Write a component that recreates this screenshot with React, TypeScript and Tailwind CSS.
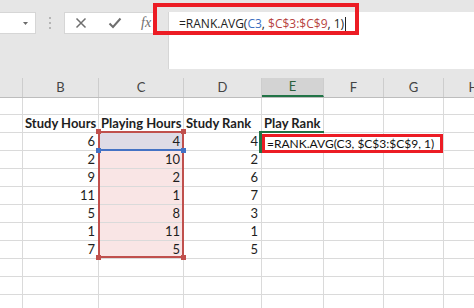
import React from "react";

const cols = [
  { k: "A", w: "w-[23px]" },
  { k: "B", w: "w-[76px]" },
  { k: "C", w: "w-[85px]" },
  { k: "D", w: "w-[78px]" },
  { k: "E", w: "w-[62px]" },
  { k: "F", w: "w-[60px]" },
  { k: "G", w: "w-[60px]" },
  { k: "H", w: "w-[60px]" },
];

const data: [string, string, string][] = [
  ["6", "4", "4"],
  ["2", "10", "2"],
  ["9", "2", "6"],
  ["11", "1", "7"],
  ["5", "8", "3"],
  ["1", "11", "1"],
  ["7", "5", "5"],
];

function Cell({
  w,
  children,
  align = "right",
  bold = false,
  bg = "",
  h = "h-[18px]",
}: {
  w: string;
  children?: React.ReactNode;
  align?: "left" | "right";
  bold?: boolean;
  bg?: string;
  h?: string;
}) {
  return (
    <div
      className={`${w} ${h} ${bg} shrink-0 box-border border-r border-b border-[#dadada] flex items-center overflow-visible whitespace-nowrap text-[13px] leading-none text-[#1e1e1e] ${
        align === "right" ? "justify-end pr-[3px]" : "justify-start pl-[2px]"
      } ${bold ? "font-bold" : ""}`}
    >
      {children}
    </div>
  );
}

export default function App() {
  return (
    <div
      className="relative w-[474px] h-[308px] overflow-hidden bg-[#e6e6e6]"
      style={{ fontFamily: "Lato, 'Liberation Sans', sans-serif" }}
    >
      {/* formula bar area */}
      <div className="flex items-start pt-[12px] h-[69px]">
        <div className="w-[36px] h-[22px] bg-white border border-l-0 border-[#d6d6d6] box-border flex items-center justify-end pr-[7px]">
          <svg width="5" height="3" viewBox="0 0 5 3">
            <path d="M0 0 L5 0 L2.5 3 Z" fill="#6b6b6b" />
          </svg>
        </div>
        <div className="ml-[13px] h-[22px] flex flex-col justify-center gap-[3px]">
          <div className="w-[2px] h-[2px] bg-[#b5b5b5]" />
          <div className="w-[2px] h-[2px] bg-[#b5b5b5]" />
          <div className="w-[2px] h-[2px] bg-[#b5b5b5]" />
        </div>
        <div className="ml-[13px] w-[90px] h-[22px] bg-white border border-[#d6d6d6] box-border flex items-center">
          <svg width="12" height="12" viewBox="0 0 12 12" className="ml-[10px]">
            <path d="M1.5 1.5 L10.5 10.5 M10.5 1.5 L1.5 10.5" stroke="#6e6e6e" strokeWidth="1.5" />
          </svg>
          <svg width="14" height="12" viewBox="0 0 14 12" className="ml-[21px]">
            <path d="M1.5 6.5 L5 10 L12.5 1.5" stroke="#6e6e6e" strokeWidth="2" fill="none" />
          </svg>
          <span
            className="ml-[19px] text-[14px] italic text-[#6e6e6e] leading-none"
            style={{ fontFamily: "'Liberation Serif', serif" }}
          >
            fx
          </span>
        </div>
        <div
          className="ml-[14px] flex-1 h-[57px] bg-white border-l border-[#d6d6d6] pt-[4px] pl-[10px] text-[12px] leading-[16px] text-[#222] whitespace-nowrap"
          style={{ fontFamily: "'Open Sans', 'Liberation Sans', sans-serif" }}
        >
          =RANK.AVG(<span className="text-[#3c6fbf]">C3</span>,{" "}
          <span className="text-[#b8433f]">$C$3:$C$9</span>, 1)
          <span className="inline-block w-[1px] h-[15px] bg-[#222] ml-[1px] align-middle" />
        </div>
      </div>

      {/* red box on formula bar */}
      <div className="absolute left-[153px] top-[3px] w-[206px] h-[32px] border-[4px] border-[#ec1c24] pointer-events-none" />

      {/* column headers */}
      <div className="mt-[9px] flex h-[19px] border-b border-[#bdbdbd] box-content">
        {cols.map((c) => (
          <div
            key={c.k}
            className={`${c.w} shrink-0 box-border border-r border-[#cdcdcd] flex items-center justify-center text-[13px] leading-none ${
              c.k === "E"
                ? "bg-[#d3d3d3] text-[#2b5f3d] border-b-2 border-b-[#217346]"
                : "text-[#444]"
            }`}
          >
            {c.k === "A" ? "" : c.k}
          </div>
        ))}
      </div>

      {/* grid */}
      <div className="bg-white">
        {/* row 1 */}
        <div className="flex">
          {cols.map((c) => (
            <Cell key={c.k} w={c.w} h="h-[17px]" />
          ))}
        </div>
        {/* row 2 headers */}
        <div className="flex">
          <Cell w={cols[0].w} />
          <Cell w={cols[1].w} align="left" bold>
            Study Hours
          </Cell>
          <Cell w={cols[2].w} align="left" bold>
            Playing Hours
          </Cell>
          <Cell w={cols[3].w} align="left" bold>
            Study Rank
          </Cell>
          <Cell w={cols[4].w} align="left" bold>
            Play Rank
          </Cell>
          <Cell w={cols[5].w} />
          <Cell w={cols[6].w} />
          <Cell w={cols[7].w} />
        </div>
        {data.map((r, i) => (
          <div className="flex" key={i}>
            <Cell w={cols[0].w} />
            <Cell w={cols[1].w}>{r[0]}</Cell>
            <Cell w={cols[2].w} bg={i === 0 ? "bg-[#dedbe6]" : "bg-[#f9e5e5]"}>
              {r[1]}
            </Cell>
            <Cell w={cols[3].w}>{r[2]}</Cell>
            <Cell w={cols[4].w} />
            <Cell w={cols[5].w} />
            <Cell w={cols[6].w} />
            <Cell w={cols[7].w} />
          </div>
        ))}
        {[0, 1, 2].map((i) => (
          <div className="flex" key={"e" + i}>
            {cols.map((c) => (
              <Cell key={c.k} w={c.w} />
            ))}
          </div>
        ))}
      </div>

      {/* range selection C3:C9 */}
      <div className="absolute left-[98px] top-[131px] w-[86px] h-[127px] border-2 border-[#c0504d] pointer-events-none" />
      <div className="absolute left-[98px] top-[149px] w-[86px] h-[2px] bg-[#4472c4]" />
      <div className="absolute left-[96px] top-[148px] w-[5px] h-[5px] bg-[#4472c4]" />
      <div className="absolute left-[181px] top-[148px] w-[5px] h-[5px] bg-[#4472c4]" />
      <div className="absolute left-[96px] top-[129px] w-[5px] h-[5px] bg-[#c0504d]" />
      <div className="absolute left-[181px] top-[129px] w-[5px] h-[5px] bg-[#c0504d]" />
      <div className="absolute left-[96px] top-[255px] w-[5px] h-[5px] bg-[#c0504d]" />
      <div className="absolute left-[181px] top-[255px] w-[5px] h-[5px] bg-[#c0504d]" />

      {/* active cell E3 */}
      <div className="absolute left-[260px] top-[131px] w-[64px] h-[2px] bg-[#217346]" />
      <div className="absolute left-[259px] top-[131px] w-[3px] h-[22px] bg-[#217346]" />
      <div className="absolute left-[262px] top-[134px] w-[181px] h-[19px] border-[3px] border-[#ec1c24] bg-white flex items-center pl-[2px]">
        <span className="text-[12px] leading-none text-[#111] whitespace-nowrap">
          =RANK.AVG(C3, $C$3:$C$9, 1)
        </span>
      </div>
    </div>
  );
}
